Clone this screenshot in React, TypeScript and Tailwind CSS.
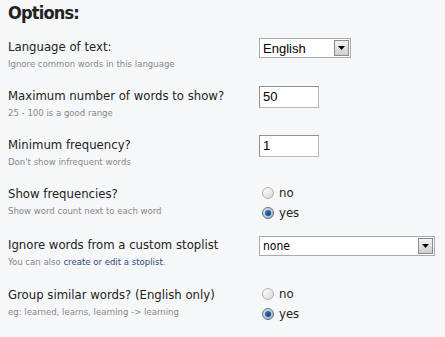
import React from 'react';

const font = { fontFamily: '"DejaVu Sans", Tahoma, sans-serif', fontStretch: 'condensed' as const };

function Arrow() {
  return (
    <span className="m-[1px] flex h-[16px] w-[15px] items-center justify-center border border-[#8a8a8a] bg-gradient-to-b from-[#f2f2f2] to-[#cfcfcf]">
      <svg width="7" height="4" viewBox="0 0 7 4">
        <path d="M0 0h7L3.5 4z" fill="#000" />
      </svg>
    </span>
  );
}

function Select({ value, width }: { value: string; width: string }) {
  return (
    <div className={`flex h-[20px] items-center border border-[#a5acb2] bg-white ${width}`}>
      <span className="flex-1 pl-[3px] text-[13px] leading-none text-black" style={{ fontFamily: '"Liberation Sans", Arial, sans-serif' }}>
        {value}
      </span>
      <Arrow />
    </div>
  );
}

function TextBox({ value }: { value: string }) {
  return (
    <div className="flex h-[22px] w-[60px] items-center border border-t-[#8f8f8f] border-l-[#8f8f8f] border-r-[#b8b8b8] border-b-[#b8b8b8] bg-white pl-[3px] text-[13px] text-black" style={{ fontFamily: '"Liberation Sans", Arial, sans-serif' }}>
      {value}
    </div>
  );
}

function Radio({ label, checked }: { label: string; checked?: boolean }) {
  return (
    <div className="flex h-[20px] items-center gap-[5px] pl-[3px]">
      <span
        className={`flex h-[12px] w-[12px] items-center justify-center rounded-full border ${
          checked ? 'border-[#5e6f86] bg-gradient-to-br from-[#dfe6ee] to-[#9fb0c4]' : 'border-[#b0b0b0] bg-gradient-to-br from-[#ffffff] to-[#d8d8d8]'
        }`}
      >
        {checked && <span className="h-[6px] w-[6px] rounded-full bg-gradient-to-br from-[#3d7fc0] to-[#0a3a73]" />}
      </span>
      <span className="text-[13px] text-[#222]">{label}</span>
    </div>
  );
}

function Row({ title, hint, children, className = '' }: { title: string; hint: React.ReactNode; children: React.ReactNode; className?: string }) {
  return (
    <div className={`flex ${className}`}>
      <div className="w-[251px] shrink-0">
        <div className="text-[13px] leading-[16px] text-[#222]">{title}</div>
        <div className="mt-[3px] text-[9.5px] leading-[11px] text-[#888]">{hint}</div>
      </div>
      <div>{children}</div>
    </div>
  );
}

export default function App() {
  return (
    <div className="min-h-[337px] w-[445px] bg-[#f6f7f9] px-[8px] pt-[1px]" style={font}>
      <h2 className="text-[18px] font-bold leading-[24px] tracking-[-0.8px] text-[#222]">Options:</h2>

      <Row title="Language of text:" hint="Ignore common words in this language" className="mt-[14px]">
        <div className="-mt-[1px]">
          <Select value="English" width="w-[92px]" />
        </div>
      </Row>

      <Row title="Maximum number of words to show?" hint="25 - 100 is a good range" className="mt-[19px]">
        <div className="-mt-[2px]">
          <TextBox value="50" />
        </div>
      </Row>

      <Row title="Minimum frequency?" hint="Don't show infrequent words" className="mt-[19px]">
        <div className="-mt-[2px]">
          <TextBox value="1" />
        </div>
      </Row>

      <Row title="Show frequencies?" hint="Show word count next to each word" className="mt-[19px]">
        <div className="-mt-[3px]">
          <Radio label="no" />
          <Radio label="yes" checked />
        </div>
      </Row>

      <Row
        title="Ignore words from a custom stoplist"
        hint={
          <>
            You can also <span className="text-[#2f4a80]">create or edit a stoplist</span>.
          </>
        }
        className="mt-[14px]"
      >
        <div className="-mt-[1px]">
          <div className="flex h-[20px] w-[176px] items-center border border-[#a5acb2] bg-white">
            <span className="flex-1 pl-[3px] text-[12px] leading-none text-black">none</span>
            <Arrow />
          </div>
        </div>
      </Row>

      <Row title="Group similar words? (English only)" hint="eg: learned, learns, learning -> learning" className="mt-[20px]">
        <div className="-mt-[3px]">
          <Radio label="no" />
          <Radio label="yes" checked />
        </div>
      </Row>
    </div>
  );
}
